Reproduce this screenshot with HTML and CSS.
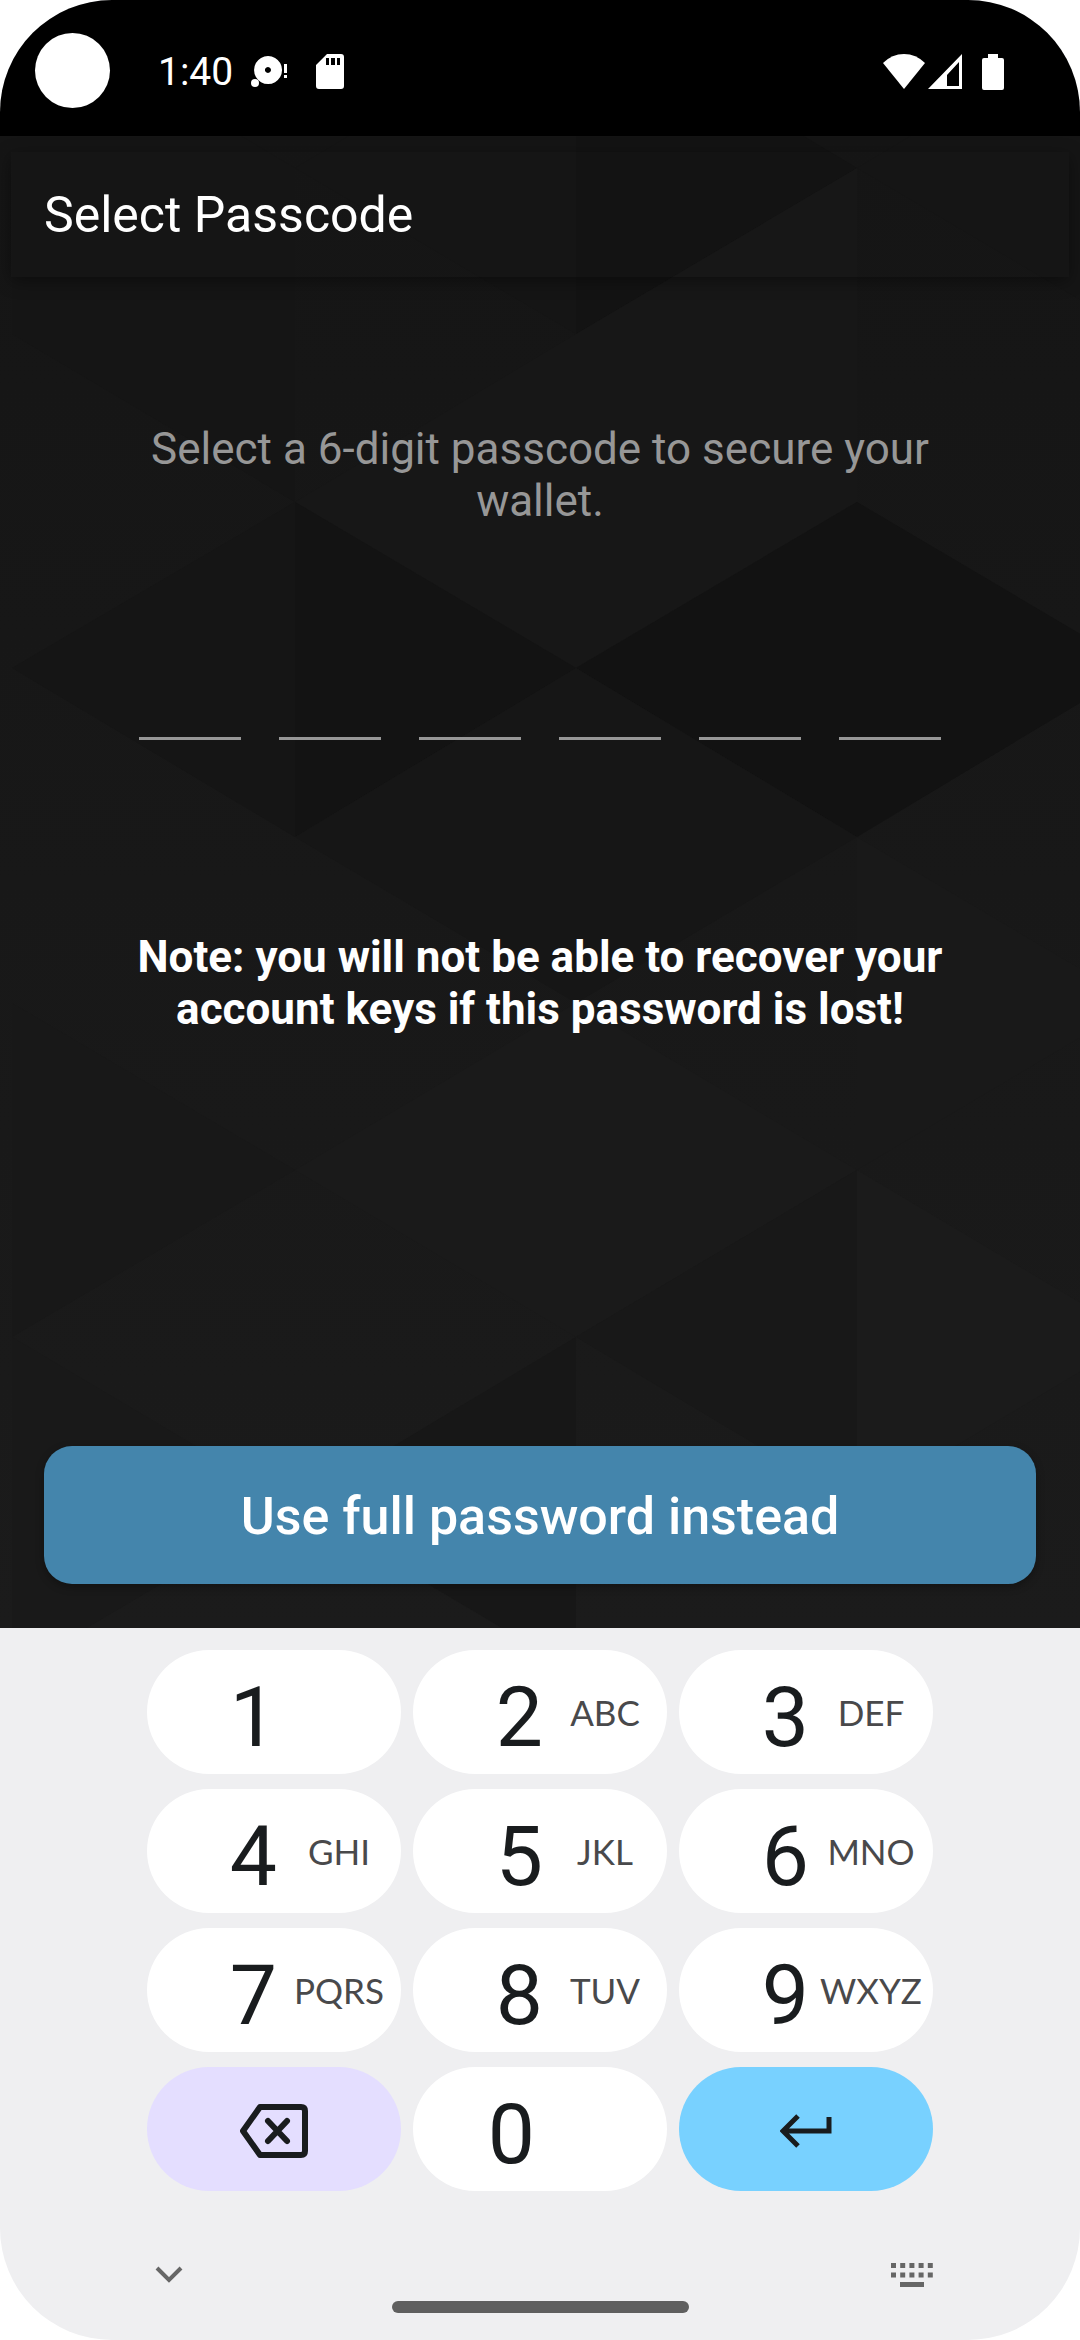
FILE: index.html
```html
<!DOCTYPE html>
<html lang="en">
<head>
<meta charset="utf-8">
<meta name="viewport" content="width=device-width, initial-scale=1">
<title>Select Passcode</title>
<link rel="stylesheet" href="styles.css">
</head>
<body>
<div class="phone">
  <header class="status-bar">
    <div class="status-left">
      <span class="camera"></span>
      <span class="clock">1:40</span>
      <svg class="icon-notice" viewBox="0 0 38 36" aria-hidden="true"><path fill="#fff" fill-rule="evenodd" d="M17 2a14 14 0 1 0 .1 0zM17 13a3 3 0 1 1-.1 0z"/><circle cx="4" cy="29" r="4" fill="#fff"/><path fill="#fff" d="M33 10h3v9h-3zM33 21h3v3h-3z"/></svg>
      <svg class="icon-sd" viewBox="0 0 28 36" aria-hidden="true"><path fill="#fff" fill-rule="evenodd" d="M11 0h14q3 0 3 3v29q0 3-3 3H3q-3 0-3-3V11zM10 4v7h3V4zM15 4v7h4V4zM21 4v7h3V4z"/></svg>
    </div>
    <div class="status-right">
      <svg class="icon-wifi" viewBox="0 0 42 36" aria-hidden="true"><path fill="#fff" d="M0 9Q9 0 21 0t21 9L21 35z"/></svg>
      <svg class="icon-signal" viewBox="0 0 34 36" aria-hidden="true"><path fill="#fff" fill-rule="evenodd" d="M34 0v35H0zM31 8L19 21v11h12z"/></svg>
      <svg class="icon-battery" viewBox="0 0 22 36" aria-hidden="true"><path fill="#fff" d="M6 0h10v4h4q2 0 2 2v28q0 2-2 2H2q-2 0-2-2V6q0-2 2-2h4z"/></svg>
    </div>
  </header>

  <main class="screen">
    <svg class="pattern" viewBox="0 136 1080 1492" preserveAspectRatio="xMidYMid slice" aria-hidden="true">
      <path fill="#151515" d="M295 168L576 0V334z"/>
      <path fill="#131313" d="M576 0L857 168L576 334z"/>
      <path fill="#151515" d="M857 168L1138 334V0z"/>
      <path fill="#151515" d="M12 0L295 168V502L12 334z"/>
      <path fill="#171717" d="M295 502L576 334V668zM576 334L857 168V502L576 668z"/>
      <path fill="#151515" d="M12 668L295 502V837z"/>
      <path fill="#131313" d="M295 502L576 668L295 837z"/>
      <path fill="#121212" d="M857 502L576 668L857 837L1138 668z"/>
      <path fill="#161616" d="M295 837L576 668V1003zM576 668L857 837L576 1003z"/>
      <path fill="#191919" d="M857 837L1138 1003L857 1170z"/>
      <path fill="#181818" d="M12 1003L295 1170L12 1337z"/>
      <path fill="#1a1a1a" d="M295 1170L576 1003L857 1170L576 1337z"/>
      <path fill="#181818" d="M857 1170V1505L576 1337z"/>
      <path fill="#171717" d="M576 1337V1672L295 1505z"/>
      <path fill="#1b1b1b" d="M857 1170L1138 1337L857 1505z"/>
      <path fill="#191919" d="M12 1337L295 1505L12 1672z"/>
    </svg>
    <div class="app-bar"><h1 class="title">Select Passcode</h1></div>
    <form class="content">
      <p class="hint" id="hint">Select a 6-digit passcode to secure your wallet.</p>
      <div class="digits" role="group" aria-labelledby="hint">
        <input class="digit" type="password" inputmode="numeric" maxlength="1" aria-label="Digit 1">
        <input class="digit" type="password" inputmode="numeric" maxlength="1" aria-label="Digit 2">
        <input class="digit" type="password" inputmode="numeric" maxlength="1" aria-label="Digit 3">
        <input class="digit" type="password" inputmode="numeric" maxlength="1" aria-label="Digit 4">
        <input class="digit" type="password" inputmode="numeric" maxlength="1" aria-label="Digit 5">
        <input class="digit" type="password" inputmode="numeric" maxlength="1" aria-label="Digit 6">
      </div>
      <p class="note">Note: you will not be able to recover your account keys if this password is lost!</p>
      <button class="primary" type="button">Use full password instead</button>
    </form>
  </main>

  <section class="keyboard" aria-label="Keyboard">
    <div class="keys">
      <button class="key" type="button"><span class="num">1</span><span class="sub"></span></button>
      <button class="key" type="button"><span class="num">2</span><span class="sub">ABC</span></button>
      <button class="key" type="button"><span class="num">3</span><span class="sub">DEF</span></button>
      <button class="key" type="button"><span class="num">4</span><span class="sub">GHI</span></button>
      <button class="key" type="button"><span class="num">5</span><span class="sub">JKL</span></button>
      <button class="key" type="button"><span class="num">6</span><span class="sub">MNO</span></button>
      <button class="key" type="button"><span class="num">7</span><span class="sub">PQRS</span></button>
      <button class="key" type="button"><span class="num">8</span><span class="sub">TUV</span></button>
      <button class="key" type="button"><span class="num">9</span><span class="sub">WXYZ</span></button>
      <button class="key key-delete" type="button" aria-label="Delete"><svg class="icon-delete" viewBox="0 0 70 56" aria-hidden="true"><g fill="none" stroke="#191c1e" stroke-width="6"><path stroke-linejoin="round" d="M21 4H62q4 0 4 4v40q0 4-4 4H21L4 28z"/><path stroke-linecap="round" d="M29 18l19 20M48 18L29 38"/></g></svg></button>
      <button class="key key-zero" type="button"><span class="num">0</span><span class="sub"></span></button>
      <button class="key key-enter" type="button" aria-label="Enter"><svg class="icon-enter" viewBox="0 0 52 34" aria-hidden="true"><path fill="none" stroke="#191c1e" stroke-width="5" d="M49 3v14H4M18 2L3 17l15 15"/></svg></button>
    </div>
    <div class="nav">
      <button class="nav-button" type="button" aria-label="Hide keyboard"><svg class="icon-chevron" viewBox="0 0 28 18" aria-hidden="true"><path fill="none" stroke="#666" stroke-width="4" d="M2 2l12 12L26 2"/></svg></button>
      <span class="home-bar"></span>
      <button class="nav-button" type="button" aria-label="Switch keyboard"><svg class="icon-keyboard" viewBox="0 0 42 24" aria-hidden="true"><path stroke="#666" stroke-width="5" stroke-dasharray="5 4.2" d="M0 2.5h42M0 12h42"/><path fill="#666" d="M9 19h24v5H9z"/></svg></button>
    </div>
  </section>
</div>
</body>
</html>
```
FILE: styles.css
```css
* { box-sizing: border-box; margin: 0; }
body { background: #fff; font-family: Roboto, "Noto Sans", sans-serif; }
button { border: 0; padding: 0; font: inherit; cursor: pointer; }
svg { display: block; flex: none; }

.phone { display: flex; flex-direction: column; min-height: 100vh; border-radius: 112px; overflow: hidden; background: #efeff1; }

.status-bar { display: flex; justify-content: space-between; height: 136px; padding: 4px 76px 0 35px; background: #000; color: #fff; }
.status-left, .status-right { display: flex; align-items: center; }
.status-bar svg, .clock { margin-top: 4px; }
.camera { width: 75px; height: 75px; border-radius: 50%; background: #fff; }
.clock { margin-left: 48px; font-size: 39px; line-height: 48px; }
.icon-notice { width: 38px; height: 36px; margin-left: 18px; }
.icon-sd { width: 28px; height: 36px; margin-left: 27px; }
.icon-wifi { width: 42px; height: 36px; }
.icon-signal { width: 34px; height: 36px; margin-left: 3px; }
.icon-battery { width: 22px; height: 36px; margin-left: 20px; }

.screen { position: relative; display: flex; flex: 1; flex-direction: column; padding: 16px 11px 44px; background: linear-gradient(#151515, #1b1b1b); color: #fff; }
.pattern { position: absolute; inset: 0; width: 100%; height: 100%; }
.app-bar { position: relative; padding: 33px 33px 31px; box-shadow: 0 4px 16px rgba(0, 0, 0, 0.4); }
.title { font-size: 50px; font-weight: 400; line-height: 61px; }

.content { position: relative; display: flex; flex: 1; flex-direction: column; padding: 146px 33px 0; font-size: 44px; line-height: 52px; text-align: center; }
.hint { padding: 0 84px; color: #979797; }
.digits { display: flex; justify-content: space-between; padding: 0 95px; margin-top: 113px; }
.digit { width: 102px; height: 100px; padding: 0; border: 0; border-bottom: 3px solid #979797; border-radius: 0; background: transparent; color: #fff; font-size: 44px; text-align: center; outline: 0; }
.note { padding: 0 84px; margin-top: 191px; font-weight: 700; }
.primary { height: 138px; padding-top: 4px; margin-top: auto; border-radius: 28px; background: #4485ac; box-shadow: 0 3px 8px rgba(0, 0, 0, 0.3); color: #fff; font-size: 52px; font-weight: 500; }

.keyboard { padding: 22px 147px 27px; color: #191c1e; }
.keys { display: grid; grid-template-columns: repeat(3, 1fr); gap: 15px 12px; }
.key { display: flex; align-items: center; justify-content: center; height: 124px; border-radius: 62px; background: #fff; color: #191c1e; }
.num { flex: 1; padding-top: 12px; font-size: 84px; line-height: 100px; text-align: right; }
.sub { flex: none; width: 124px; color: #49494b; font-family: Lato, sans-serif; font-size: 35px; }
.key-zero .num { padding-right: 8px; }
.key-delete, .key-enter { padding-top: 4px; }
.key-delete { background: #e4deff; }
.key-enter { background: #78d1ff; }
.icon-delete { width: 70px; height: 56px; }
.icon-enter { width: 52px; height: 34px; }
.nav { display: flex; align-items: flex-start; justify-content: space-between; margin-top: 69px; }
.nav-button { width: 42px; background: transparent; }
.icon-chevron { width: 28px; height: 18px; margin: 6px 0 0 8px; }
.icon-keyboard { width: 42px; height: 24px; margin-top: 3px; }
.home-bar { width: 297px; height: 12px; margin-top: 41px; border-radius: 6px; background: #5f5f5f; }
```
